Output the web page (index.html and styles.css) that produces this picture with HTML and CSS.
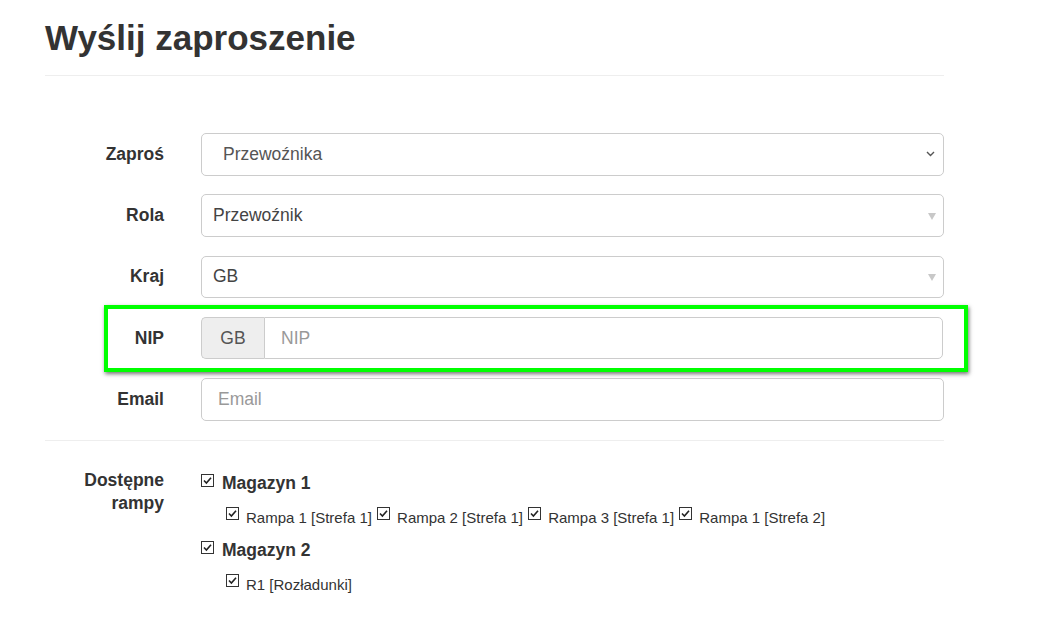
FILE: index.html
```html
<!DOCTYPE html>
<html lang="pl">
<head>
<meta charset="utf-8">
<title>Wyślij zaproszenie</title>
<link rel="stylesheet" href="styles.css">
</head>
<body>
<div class="page">
  <h1 class="title">Wyślij zaproszenie</h1>
  <div class="sep sep-top"></div>
  <div class="form">
    <div class="row">
      <div class="lbl">Zaproś</div>
      <div class="control native">
        <span class="val">Przewoźnika</span>
        <svg class="chev" width="9" height="6" viewBox="0 0 9 6"><path d="M1 1 L4.5 4.5 L8 1" fill="none" stroke="#555" stroke-width="1.4"/></svg>
      </div>
    </div>
    <div class="row">
      <div class="lbl">Rola</div>
      <div class="control s2">
        <span class="val">Przewoźnik</span>
        <span class="tri"></span>
      </div>
    </div>
    <div class="row">
      <div class="lbl">Kraj</div>
      <div class="control s2">
        <span class="val">GB</span>
        <span class="tri"></span>
      </div>
    </div>
    <div class="row row-nip">
      <div class="lbl">NIP</div>
      <div class="group">
        <span class="addon">GB</span>
        <input class="input input-grp" type="text" placeholder="NIP">
      </div>
      <div class="highlight"></div>
    </div>
    <div class="row">
      <div class="lbl">Email</div>
      <input class="input" type="text" placeholder="Email">
    </div>
  </div>
  <div class="sep sep-mid"></div>
  <div class="ramps">
    <div class="lbl lbl-ramps">Dostępne<br>rampy</div>
    <div class="tree">
      <div class="wh"><svg class="cb" width="13" height="13" viewBox="0 0 13 13"><rect x="0.5" y="0.5" width="12" height="12" fill="#fff" stroke="#333"/><path d="M3 6.5 L5.4 9 L10 3.8" fill="none" stroke="#222" stroke-width="1.6"/></svg><span class="wh-name">Magazyn 1</span></div>
      <div class="items">
        <span class="item"><svg class="cb" width="13" height="13" viewBox="0 0 13 13"><rect x="0.5" y="0.5" width="12" height="12" fill="#fff" stroke="#333"/><path d="M3 6.5 L5.4 9 L10 3.8" fill="none" stroke="#222" stroke-width="1.6"/></svg><span class="item-name">Rampa 1 [Strefa 1]</span></span>
        <span class="item"><svg class="cb" width="13" height="13" viewBox="0 0 13 13"><rect x="0.5" y="0.5" width="12" height="12" fill="#fff" stroke="#333"/><path d="M3 6.5 L5.4 9 L10 3.8" fill="none" stroke="#222" stroke-width="1.6"/></svg><span class="item-name">Rampa 2 [Strefa 1]</span></span>
        <span class="item"><svg class="cb" width="13" height="13" viewBox="0 0 13 13"><rect x="0.5" y="0.5" width="12" height="12" fill="#fff" stroke="#333"/><path d="M3 6.5 L5.4 9 L10 3.8" fill="none" stroke="#222" stroke-width="1.6"/></svg><span class="item-name">Rampa 3 [Strefa 1]</span></span>
        <span class="item"><svg class="cb" width="13" height="13" viewBox="0 0 13 13"><rect x="0.5" y="0.5" width="12" height="12" fill="#fff" stroke="#333"/><path d="M3 6.5 L5.4 9 L10 3.8" fill="none" stroke="#222" stroke-width="1.6"/></svg><span class="item-name">Rampa 1 [Strefa 2]</span></span>
      </div>
      <div class="wh"><svg class="cb" width="13" height="13" viewBox="0 0 13 13"><rect x="0.5" y="0.5" width="12" height="12" fill="#fff" stroke="#333"/><path d="M3 6.5 L5.4 9 L10 3.8" fill="none" stroke="#222" stroke-width="1.6"/></svg><span class="wh-name">Magazyn 2</span></div>
      <div class="items">
        <span class="item"><svg class="cb" width="13" height="13" viewBox="0 0 13 13"><rect x="0.5" y="0.5" width="12" height="12" fill="#fff" stroke="#333"/><path d="M3 6.5 L5.4 9 L10 3.8" fill="none" stroke="#222" stroke-width="1.6"/></svg><span class="item-name">R1 [Rozładunki]</span></span>
      </div>
    </div>
  </div>
</div>
</body>
</html>
```

FILE: styles.css
```css
* { box-sizing: border-box; }
html, body { margin: 0; padding: 0; background: #fff; }
body {
  font-family: "Liberation Sans", Arial, sans-serif;
  color: #333;
  font-size: 17.5px;
}
.page {
  width: 944px;
  padding-left: 45px;
  padding-top: 18px;
}
.title {
  margin: 0;
  font-size: 35px;
  line-height: 40px;
  font-weight: 700;
  color: #333;
}
.sep {
  height: 1px;
  background: #eee;
}
.sep-top { margin-top: 17px; }
.form {
  margin-top: 57px;
  display: flex;
  flex-direction: column;
  gap: 18.75px;
}
.row {
  display: flex;
  align-items: center;
  height: 42.5px;
  gap: 37px;
}
.row-nip { position: relative; }
.lbl {
  width: 119px;
  flex: none;
  text-align: right;
  font-weight: 700;
  font-size: 17.5px;
  color: #333;
}
.control {
  flex: 1;
  height: 42.5px;
  border: 1px solid #ccc;
  border-radius: 5px;
  display: flex;
  align-items: center;
  color: #555;
  font-size: 17.5px;
  background: #fff;
}
.native { padding: 0 8px 0 21px; }
.native .val { flex: 1; }
.chev { display: block; }
.s2 { padding: 0 7px 0 11px; color: #444; }
.s2 .val { flex: 1; }
.tri {
  width: 0; height: 0;
  border-left: 4.5px solid transparent;
  border-right: 4.5px solid transparent;
  border-top: 7px solid #c8c8c8;
  margin-top: 2px;
}
.input {
  flex: 1;
  height: 42.5px;
  border: 1px solid #ccc;
  border-radius: 5px;
  padding: 0 16px;
  font-family: "Liberation Sans", Arial, sans-serif;
  font-size: 17.5px;
  color: #555;
  background: #fff;
  outline: none;
  min-width: 0;
}
.input::placeholder { color: #999; }
.group {
  flex: 1;
  display: flex;
  height: 42.5px;
  margin-right: 1px;
}
.addon {
  width: 63px;
  flex: none;
  display: flex;
  align-items: center;
  justify-content: center;
  background: #eee;
  border: 1px solid #ccc;
  border-right: 0;
  border-radius: 5px 0 0 5px;
  color: #555;
  font-size: 17.5px;
}
.input-grp {
  border-radius: 0 5px 5px 0;
}
.highlight {
  position: absolute;
  left: 59px;
  top: -12px;
  width: 864px;
  height: 67px;
  border: 4px solid #00ff00;
  box-shadow: 1px 2px 4px rgba(0,0,0,0.55);
  pointer-events: none;
}
.sep-mid { margin-top: 19.5px; }
.ramps {
  display: flex;
  gap: 37px;
  margin-top: 28px;
}
.lbl-ramps {
  line-height: 22.5px;
}
.tree {
  display: flex;
  flex-direction: column;
}
.wh {
  line-height: 25px;
  height: 25px;
  font-size: 17.5px;
  margin-top: 2px;
}
.wh .cb { vertical-align: 2px; margin-right: 8px; }
.wh-name { font-weight: 700; color: #333; }
.items {
  margin: 11px 0 8px 25px;
  font-size: 15px;
  line-height: 21px;
  color: #333;
  white-space: nowrap;
}
.item { margin-right: 1px; }
.item .cb { vertical-align: 3px; margin-right: 7px; }
.cb { display: inline-block; }
```
